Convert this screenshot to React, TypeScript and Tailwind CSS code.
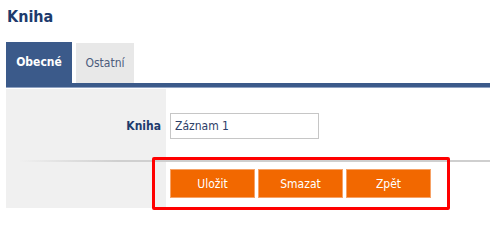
const buttons = ['Uložit', 'Smazat', 'Zpět'];

const App = () => {
  return (
    <div className="relative w-[490px] h-[216px] overflow-hidden bg-white font-['Tahoma','DejaVu_Sans_Condensed','Liberation_Sans',sans-serif] text-[12px]">
      {/* Title */}
      <h1 className="pl-[7px] pt-[7px] h-[42px] text-[16px] leading-[20px] font-bold text-[#1d3b6d]">Kniha</h1>

      {/* Tabs */}
      <div className="ml-[6px] flex items-end gap-[4px] h-[41px]">
        <div className="w-[66px] h-[41px] bg-[#3b5a8a] text-white font-bold flex items-center justify-center pb-[2px]">
          Obecné
        </div>
        <div className="w-[58px] h-[40px] bg-[#e8e8e8] text-[#4c5c7c] flex items-center justify-center">
          Ostatní
        </div>
      </div>
      <div className="ml-[6px] h-[5px] bg-[#3b5a8a] border-b border-[#8fa2c2]" />

      {/* Form */}
      <div className="ml-[6px] mt-[1px]">
        <div className="flex h-[71px]">
          <div className="w-[160px] bg-[#f0f0f0] flex items-center justify-end pr-[5px] pt-[2px] font-bold text-[#1d3b6d]">
            Kniha
          </div>
          <div className="flex-1 flex items-center pl-[4px] pt-[2px]">
            <input
              type="text"
              defaultValue="Záznam 1"
              className="w-[149px] h-[26px] border border-[#c6c6c6] px-[4px] text-[12px] text-[#2d4068] outline-none"
            />
          </div>
        </div>
        <div className="flex h-[2px]">
          <div className="w-[160px] bg-[#f0f0f0]">
            <div className="h-full bg-gradient-to-r from-[#f0f0f0] from-[8%] to-[#cfcfcf] to-[70%]" />
          </div>
          <div className="flex-1 bg-[#cfcfcf]" />
        </div>
        <div className="flex h-[46px]">
          <div className="w-[160px] bg-[#f0f0f0]" />
          <div className="flex-1 flex items-start gap-[3px] pl-[4px] pt-[7px]">
            {buttons.map(label => (
              <button
                key={label}
                className="w-[85px] h-[29px] bg-[#f26800] border border-[#f7a266] text-white text-[12px]"
              >
                {label}
              </button>
            ))}
          </div>
        </div>
      </div>

      {/* Highlight annotation */}
      <div className="absolute left-[152px] top-[157px] w-[298px] h-[53px] border-[3px] border-[#ff0000] rounded-[2px] pointer-events-none" />
    </div>
  );
};

export default App;
